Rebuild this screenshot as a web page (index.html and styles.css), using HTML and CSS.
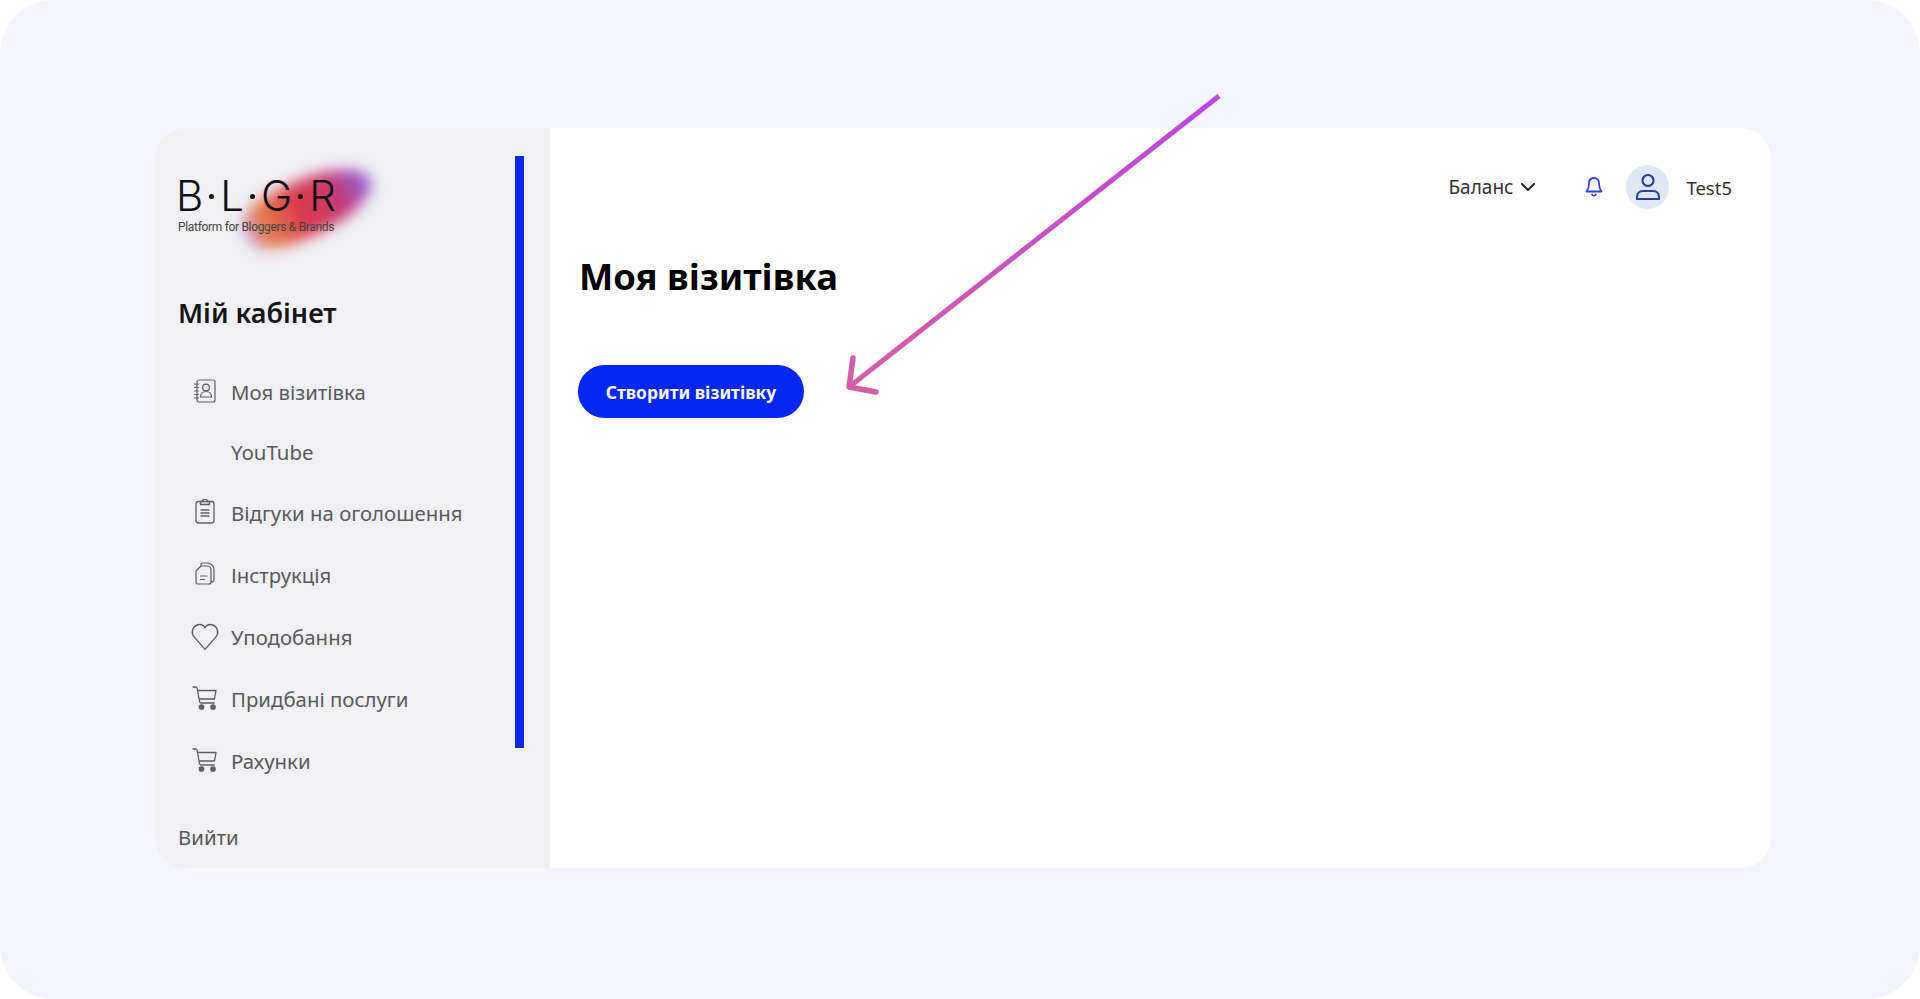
FILE: index.html
```html
<!DOCTYPE html>
<html lang="uk">
<head>
  <meta charset="UTF-8" />
  <meta name="viewport" content="width=device-width, initial-scale=1.0"/>
  <title>Моя візитівка</title>
  <link rel="stylesheet" href="styles.css">
</head>
<body>

  <div class="frame">
    <div class="card">

      <aside class="sidebar">
        <div class="scroll-thumb"></div>

        <div class="logo">
          <div class="logo-blob"></div>
          <div class="logo-name"><span>B</span><i></i><span>L</span><i></i><span>G</span><i></i><span>R</span></div>
          <div class="logo-tag">Platform for Bloggers &amp; Brands</div>
        </div>

        <h2 class="side-title">Мій кабінет</h2>

        <nav class="nav">
          <a class="nav-item short">
            <span class="nav-icon">
              <svg width="26" height="26" viewBox="0 0 26 26" fill="none" stroke="currentColor" stroke-width="1.2" stroke-linecap="round">
                <rect x="5" y="2" width="18" height="22" rx="2"/>
                <path d="M2.500 6h4M2.500 9.500h4M2.500 13h4M2.500 16.500h4M2.500 20h4"/>
                <circle cx="14" cy="9.500" r="3.400"/>
                <path d="M8.500 19c0-3.400 2.400-5.500 5.500-5.500s5.500 2.100 5.500 5.500z"/>
              </svg>
            </span>
            Моя візитівка
          </a>
          <a class="nav-item short">
            <span class="nav-icon"></span>
            YouTube
          </a>
          <a class="nav-item">
            <span class="nav-icon">
              <svg width="26" height="26" viewBox="0 0 26 26" fill="none" stroke="currentColor" stroke-width="1.300" stroke-linecap="round">
                <rect x="4" y="2.500" width="18" height="21.500" rx="2.500"/>
                <path d="M8.500 2.500h2a2.500 2.500 0 0 1 5 0h2v3h-9z"/>
                <path d="M9 11h8M9 14h8M9 17h8"/>
              </svg>
            </span>
            Відгуки на оголошення
          </a>
          <a class="nav-item">
            <span class="nav-icon">
              <svg width="26" height="26" viewBox="0 0 26 26" fill="none" stroke="currentColor" stroke-width="1.200" stroke-linecap="round" stroke-linejoin="round">
                <path d="M9 5h6c2.500 0 4 1.500 4 4v12a2 2 0 0 1-2 2H6a2 2 0 0 1-2-2V10z"/>
                <path d="M9 5V4a2 2 0 0 1 2-2h4c4 0 7 3 7 7v10a2 2 0 0 1-3 1.700"/>
                <path d="M8.500 15h6.500M8.500 18.500h4"/>
              </svg>
            </span>
            Інструкція
          </a>
          <a class="nav-item">
            <span class="nav-icon">
              <svg width="30" height="30" viewBox="0 0 28 28" fill="none" stroke="currentColor" stroke-width="1.300" stroke-linejoin="round">
                <path d="M14 26.500 3.800 14.800C.8 11.300 2 5 7.500 3.500 10.300 2.800 12.800 4 14 6.500 15.200 4 17.700 2.800 20.500 3.500 26 5 27.200 11.300 24.200 14.800z"/>
              </svg>
            </span>
            Уподобання
          </a>
          <a class="nav-item">
            <span class="nav-icon">
              <svg width="26" height="26" viewBox="0 0 26 26" fill="none" stroke="currentColor" stroke-width="1.300" stroke-linecap="round" stroke-linejoin="round">
                <path d="M1 2h2.500c1 0 1.500.5 1.700 1.500l2.300 13c.2 1 .8 1.500 1.800 1.500h13"/>
                <path d="M6 5.500h18l-1.500 8.500H7.500"/>
                <circle cx="9.500" cy="22" r="2.200" fill="currentColor"/>
                <circle cx="21" cy="22" r="2.200" fill="currentColor"/>
              </svg>
            </span>
            Придбані послуги
          </a>
          <a class="nav-item">
            <span class="nav-icon">
              <svg width="26" height="26" viewBox="0 0 26 26" fill="none" stroke="currentColor" stroke-width="1.300" stroke-linecap="round" stroke-linejoin="round">
                <path d="M1 2h2.500c1 0 1.500.5 1.700 1.500l2.300 13c.2 1 .8 1.500 1.800 1.500h13"/>
                <path d="M6 5.500h18l-1.500 8.500H7.500"/>
                <circle cx="9.500" cy="22" r="2.200" fill="currentColor"/>
                <circle cx="21" cy="22" r="2.200" fill="currentColor"/>
              </svg>
            </span>
            Рахунки
          </a>
        </nav>

        <a class="logout">Вийти</a>
      </aside>

      <main class="content">
        <header class="topbar">
          <div class="balance">
            Баланс
            <svg width="16" height="10" viewBox="0 0 16 10" fill="none" stroke="#222" stroke-width="2" stroke-linecap="round" stroke-linejoin="round">
              <path d="M2 2l6 6 6-6"/>
            </svg>
          </div>
          <svg class="bell" width="20" height="22" viewBox="0 0 20 22" fill="none" stroke="#2f3fe0" stroke-width="1.800" stroke-linecap="round" stroke-linejoin="round">
            <path d="M10 2c-3.300 0-5 2.500-5 5.500 0 4-1 6-2.500 8h15c-1.500-2-2.500-4-2.500-8C15 4.500 13.300 2 10 2z"/>
            <path d="M8 18.500c.5 1.500 3.500 1.500 4 0"/>
          </svg>
          <div class="avatar">
            <svg width="26" height="28" viewBox="0 0 26 28" fill="none" stroke="#2b3fa8" stroke-width="2.200" stroke-linejoin="round">
              <circle cx="13" cy="7.500" r="5.500"/>
              <path d="M2 26v-2c0-3.500 2.500-6 6-6h10c3.500 0 6 2.500 6 6v2z"/>
            </svg>
          </div>
          <span class="user-name">Test5</span>
        </header>

        <h1 class="page-title">Моя візитівка</h1>
        <button class="btn">Створити візитівку</button>
      </main>

    </div>

    <svg class="arrow" width="400" height="320" viewBox="0 0 400 320" fill="none" stroke-linecap="round" stroke-linejoin="round">
      <defs>
        <linearGradient id="arrowGrad" gradientUnits="userSpaceOnUse" x1="369" y1="7" x2="0" y2="300">
          <stop offset="0" stop-color="#ba47e2"/>
          <stop offset="1" stop-color="#d65ea4"/>
        </linearGradient>
      </defs>
      <path d="M370 6 0 297" stroke="url(#arrowGrad)" stroke-width="5" stroke-linecap="butt"/>
      <path d="M4 268 0 297 27 302" stroke="#d35ea8" stroke-width="5.500"/>
    </svg>
  </div>

</body>
</html>
```

FILE: styles.css
```css
* {
  box-sizing: border-box;
}

html, body {
  margin: 0;
  height: 100%;
  background: #ffffff;
  overflow: hidden;
}

body {
  font-family: "Noto Sans", "Open Sans", sans-serif;
  color: #222;
}

.frame {
  position: relative;
  width: 1920px;
  height: 999px;
  padding: 128px 149px 131px 155px;
  background: #f5f5ff;
  border-radius: 54px;
}

.card {
  display: flex;
  height: 100%;
  background: #ffffff;
  border-radius: 30px;
  overflow: hidden;
}

/* Sidebar */
.sidebar {
  position: relative;
  width: 395px;
  flex-shrink: 0;
  padding: 53px 0 0 23px;
  background: #f0f0f5;
}

.scroll-thumb {
  position: absolute;
  top: 28px;
  left: 360px;
  width: 9px;
  height: 592px;
  background: #0a28ee;
}

.logo {
  position: relative;
  height: 66px;
}

.logo-blob {
  position: absolute;
  top: -2px;
  left: 62px;
  width: 136px;
  height: 56px;
  border-radius: 38% 60% 55% 45%;
  background: linear-gradient(90deg, #c79ae6 0%, #e58350 13%, #dc3d4c 42%, #c8386f 70%, #9064dc 100%);
  transform: rotate(-25deg);
  filter: blur(7px);
}

.logo-name {
  position: relative;
  display: flex;
  align-items: center;
  justify-content: space-between;
  width: 160px;
  margin-left: -2px;
  font-family: "Inter", sans-serif;
  font-weight: 300;
  font-size: 42px;
  line-height: 30px;
  color: #111;
}

.logo-name i {
  width: 5px;
  height: 5px;
  border-radius: 50%;
  background: #111;
}

.logo-tag {
  position: relative;
  margin-top: 9px;
  font-family: "Roboto", sans-serif;
  font-size: 12px;
  line-height: 14px;
  letter-spacing: -0.32px;
  color: #444;
  white-space: nowrap;
}

.side-title {
  margin: 48px 0 0;
  font-size: 27px;
  line-height: 36px;
  font-weight: 600;
  color: #161616;
}

.nav {
  margin-top: 31px;
}

.nav-item {
  display: flex;
  align-items: center;
  gap: 14px;
  height: 62px;
  font-size: 20.400px;
  color: #5a5a5e;
  white-space: nowrap;
}

.nav-item.short {
  height: 60px;
}

.nav-icon {
  display: flex;
  justify-content: center;
  flex-shrink: 0;
  width: 26px;
  margin-left: 14px;
  margin-right: -1px;
  color: #5f5f63;
}

.nav-icon svg {
  flex-shrink: 0;
  margin-top: -3px;
}

.logout {
  display: block;
  margin-top: 31px;
  font-size: 20.400px;
  line-height: 28px;
  color: #58585c;
}

/* Main area */
.content {
  flex: 1;
  padding: 36px 39px 0 29px;
}

.topbar {
  display: flex;
  align-items: center;
  justify-content: flex-end;
  height: 46px;
}

.balance {
  display: flex;
  align-items: center;
  gap: 7px;
  font-size: 19px;
  color: #333;
}

.bell {
  margin-left: 48px;
}

.avatar {
  display: flex;
  align-items: center;
  justify-content: center;
  width: 43px;
  height: 44px;
  margin-left: 22px;
  border-radius: 50%;
  background: #dfe9f5;
}

.user-name {
  margin-left: 17px;
  font-size: 18.500px;
  color: #333;
}

.page-title {
  margin: 42px 0 0 0;
  font-size: 36.400px;
  line-height: 48px;
  font-weight: 700;
  color: #000;
}

.btn {
  display: block;
  width: 226px;
  height: 53px;
  margin: 65px 0 0 -1px;
  border: none;
  border-radius: 27px;
  background: #0427f2;
  color: #fff;
  font-family: inherit;
  font-size: 17.400px;
  font-weight: 700;
  cursor: pointer;
}

/* Annotation arrow */
.arrow {
  position: absolute;
  top: 90px;
  left: 849px;
  overflow: visible;
}
```
